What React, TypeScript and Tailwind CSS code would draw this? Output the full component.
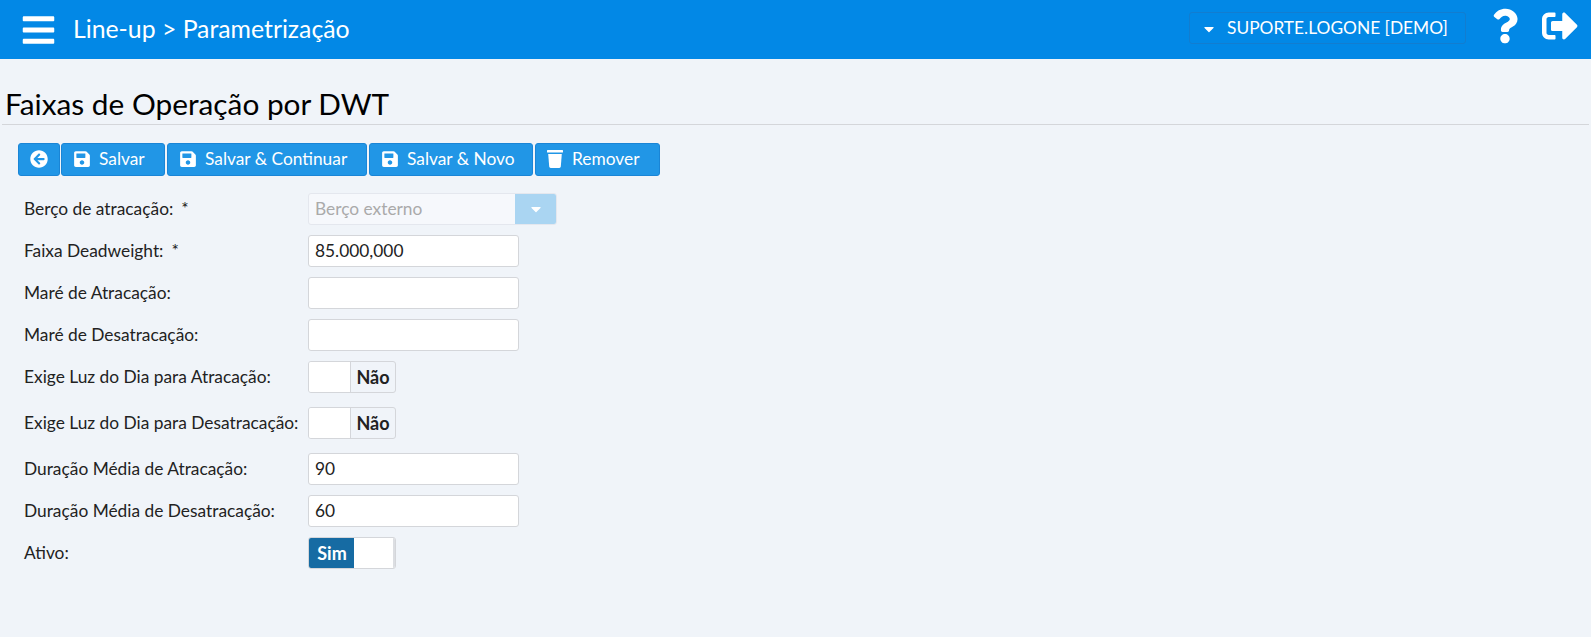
import { FaArrowCircleLeft, FaBars, FaCaretDown, FaQuestion, FaSave, FaSignOutAlt } from 'react-icons/fa';
import type { ReactNode } from 'react';

function ToolButton({ icon, label, className }: { icon: ReactNode; label?: string; className: string }) {
  return (
    <button className={`flex h-[33px] items-center rounded-[3px] border border-[#1a85d6] bg-[#2196e6] pb-[1px] text-[17.33px] text-white ${className}`}>
      {icon}
      {label && <span>{label}</span>}
    </button>
  );
}

function Row({ label, required, children, className }: { label: string; required?: boolean; children: ReactNode; className: string }) {
  return (
    <div className={`flex items-center ${className}`}>
      <label className="w-[290px] shrink-0 whitespace-nowrap pl-[6px] text-[17.33px] text-[#222]">
        {label}
        {required && <span className="ml-[8px]">*</span>}
      </label>
      {children}
    </div>
  );
}

function TextInput({ value }: { value?: string }) {
  return (
    <div className="h-[32px] w-[211px] rounded-[3px] border border-[#d4d6da] bg-white px-[6px] text-[17.33px] leading-[30px] text-[#222]">
      {value}
    </div>
  );
}

function Toggle({ on }: { on?: boolean }) {
  if (on) {
    return (
      <div className="flex h-[32px] w-[88px] overflow-hidden rounded-[3px] border border-[#d4d6da] bg-white">
        <div className="flex w-[45px] items-center justify-center bg-[#166ba3] pl-[1px] text-[18px] font-bold text-white">Sim</div>
        <div className="flex-1 border-r-2 border-[#dcdee2]" />
      </div>
    );
  }
  return (
    <div className="flex h-[32px] w-[88px] overflow-hidden rounded-[3px] border border-[#d4d6da]">
      <div className="w-[42px] border-r border-[#d4d6da] bg-white" />
      <div className="flex flex-1 items-center justify-center text-[18px] font-bold text-[#222]">Não</div>
    </div>
  );
}

function TrashIcon() {
  return (
    <svg viewBox="0 0 16 18" className="mr-[9px] h-[18px] w-[16px]" fill="currentColor">
      <rect x="0" y="0" width="16" height="2.5" rx="0.5" />
      <path d="M1.2 4h13.6l-1 12.6c-.1.8-.7 1.4-1.5 1.4H3.7c-.8 0-1.4-.6-1.5-1.4L1.2 4z" />
    </svg>
  );
}

export default function App() {
  return (
    <div className="min-h-[637px] bg-[#f0f4f9] font-['Lato','Liberation_Sans',sans-serif]">
      {/* Top bar */}
      <header className="flex h-[59px] items-center bg-[#0288e6] text-white">
        <FaBars className="ml-[22px] h-[36px] w-[33px]" />
        <span className="mb-[1px] ml-[18px] text-[24.8px]">Line-up &gt; Parametrização</span>
        <div className="mb-[4px] ml-auto flex h-[32px] w-[277px] items-center rounded-[3px] border border-[#127dd0] pl-[13px] text-[17.33px]">
          <FaCaretDown className="mr-[12px] mt-[2px] h-[16px] w-[12px]" />
          SUPORTE.LOGONE [DEMO]
        </div>
        <FaQuestion className="mb-[8px] ml-[26px] h-[36px] w-[26px]" />
        <FaSignOutAlt className="mb-[8px] ml-[24px] mr-[13px] h-[36px] w-[36px]" />
      </header>

      <h1 className="ml-[5px] mt-[28px] text-[29.8px] leading-[34px] text-black">Faixas de Operação por DWT</h1>
      <div className="mx-[2px] mt-[3px] h-px bg-[#d4d6da]" />

      {/* Actions */}
      <div className="ml-[18px] mt-[18px] flex gap-[1px]">
        <ToolButton className="w-[42px] justify-center" icon={<FaArrowCircleLeft className="h-[18px] w-[18px]" />} />
        <ToolButton className="mr-[1px] w-[104px] pl-[11px]" icon={<FaSave className="mr-[8px] h-[18px] w-[18px]" />} label="Salvar" />
        <ToolButton className="mr-[1px] w-[200px] pl-[11px]" icon={<FaSave className="mr-[8px] h-[18px] w-[18px]" />} label="Salvar & Continuar" />
        <ToolButton className="mr-[1px] w-[164px] pl-[11px]" icon={<FaSave className="mr-[8px] h-[18px] w-[18px]" />} label="Salvar & Novo" />
        <ToolButton className="w-[125px] pl-[11px]" icon={<TrashIcon />} label="Remover" />
      </div>

      {/* Form */}
      <form className="ml-[18px] mt-[17px] flex flex-col">
        <Row label="Berço de atracação:" required className="h-[32px]">
          <div className="flex h-[32px] w-[249px] overflow-hidden rounded-[3px] border border-[#e4e7ee] bg-[#f6f8fc]">
            <span className="flex-1 px-[6px] text-[17.33px] leading-[30px] text-[#aaa]">Berço externo</span>
            <div className="flex w-[41px] items-center justify-center bg-[#aad5f2] text-white">
              <FaCaretDown className="h-[16px] w-[14px]" />
            </div>
          </div>
        </Row>
        <Row label="Faixa Deadweight:" required className="mt-[10px] h-[32px]">
          <TextInput value="85.000,000" />
        </Row>
        <Row label="Maré de Atracação:" className="mt-[10px] h-[32px]">
          <TextInput />
        </Row>
        <Row label="Maré de Desatracação:" className="mt-[10px] h-[32px]">
          <TextInput />
        </Row>
        <Row label="Exige Luz do Dia para Atracação:" className="mt-[10px] h-[32px]">
          <Toggle />
        </Row>
        <Row label="Exige Luz do Dia para Desatracação:" className="mt-[14px] h-[32px]">
          <Toggle />
        </Row>
        <Row label="Duração Média de Atracação:" className="mt-[14px] h-[32px]">
          <TextInput value="90" />
        </Row>
        <Row label="Duração Média de Desatracação:" className="mt-[10px] h-[32px]">
          <TextInput value="60" />
        </Row>
        <Row label="Ativo:" className="mt-[10px] h-[32px]">
          <Toggle on />
        </Row>
      </form>
    </div>
  );
}
